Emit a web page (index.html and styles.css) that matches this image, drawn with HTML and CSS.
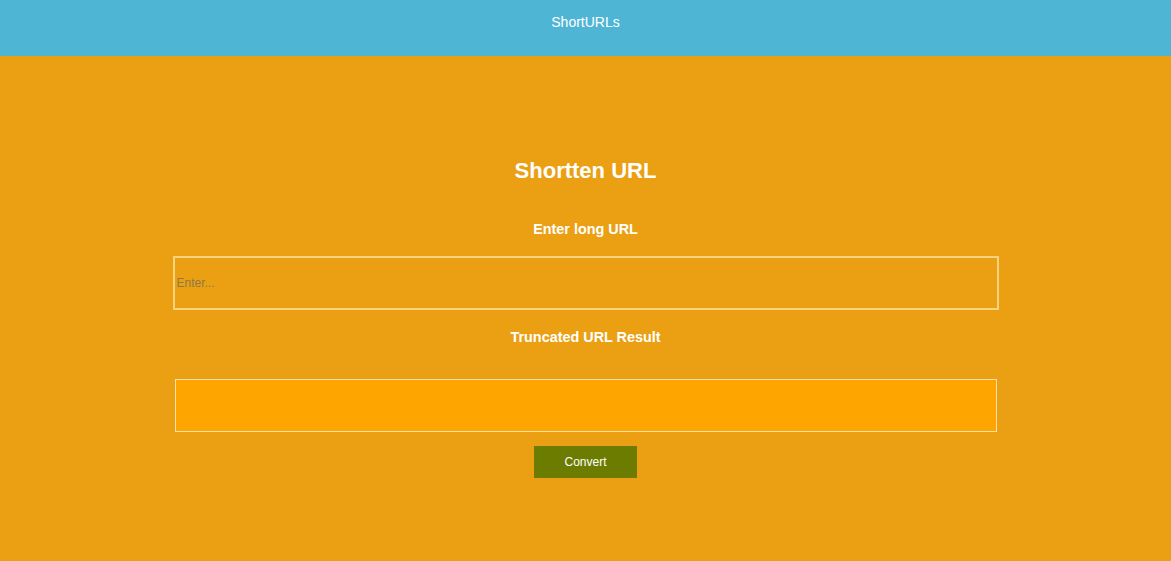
FILE: index.html
```html
<!DOCTYPE html>
<html lang="en">
<head>
<meta charset="utf-8">
<title>ShortURLs</title>
<link rel="stylesheet" href="styles.css">
</head>
<body>
<header class="topbar">ShortURLs</header>
<main class="content">
  <h1 class="title">Shortten URL</h1>
  <label class="label label-enter" for="longurl">Enter long URL</label>
  <input class="url-input" id="longurl" type="text" placeholder="Enter...">
  <div class="label label-result">Truncated URL Result</div>
  <div class="result-box"></div>
  <button class="convert-btn" type="button">Convert</button>
</main>
</body>
</html>
```
FILE: styles.css
```css
html, body {
  margin: 0;
  padding: 0;
}
body {
  background: #eba013;
  font-family: "Liberation Sans", Arial, sans-serif;
  color: #ffffff;
  min-height: 561px;
}
.topbar {
  height: 56px;
  line-height: 44px;
  background: #4fb5d5;
  text-align: center;
  font-size: 14px;
  color: #ffffff;
}
.content {
  display: flex;
  flex-direction: column;
  align-items: center;
  padding-top: 102px;
}
.title {
  margin: 0;
  font-size: 22px;
  line-height: 26px;
  font-weight: bold;
}
.label {
  display: block;
  font-size: 14.4px;
  line-height: 18px;
  font-weight: bold;
}
.label-enter {
  margin-top: 36px;
}
.url-input {
  box-sizing: border-box;
  margin-top: 18px;
  width: 826px;
  height: 54px;
  border: 2px solid #f8d47f;
  background: #eba013;
  padding: 0 2px;
  font-family: "Liberation Sans", Arial, sans-serif;
  font-size: 12px;
  color: #333;
  outline: none;
}
.url-input::placeholder {
  color: #8f7a45;
}
.label-result {
  margin-top: 18px;
}
.result-box {
  box-sizing: border-box;
  margin-top: 33px;
  width: 822px;
  height: 53px;
  border: 1px solid #fbe0ab;
  background: #ffa500;
}
.convert-btn {
  margin-top: 14px;
  width: 103px;
  height: 32px;
  border: none;
  background: #6b7c00;
  color: #ffffff;
  font-family: "Liberation Sans", Arial, sans-serif;
  font-size: 12px;
  cursor: pointer;
}
```
